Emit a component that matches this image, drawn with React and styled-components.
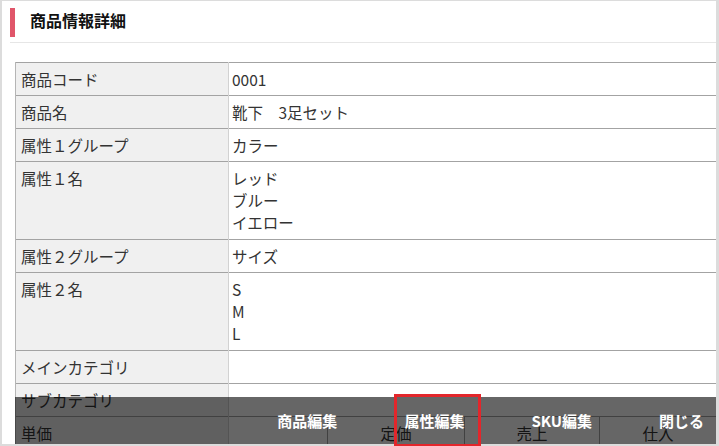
import React from "react";
import styled, { createGlobalStyle } from "styled-components";

const GlobalStyle = createGlobalStyle`
    html, body {
        margin: 0;
        overflow: hidden;
        background: #fff;
        font-family: "Noto Sans CJK JP", "Noto Sans", sans-serif;
        color: #333;
    }
`

const Frame = styled.div`
    position: relative;
    height: 446px;
    box-sizing: border-box;
    border-style: solid;
    border-color: #dcdcdc;
    border-width: 1px 3px 2px 2px;
    background: #fff;
`

const Content = styled.div`
    height: 100%;
    overflow: hidden;
`

const Header = styled.div`
    margin-left: 8px;
    padding: 7px 0 5px;
    border-bottom: 1px solid #e6e6e6;
`

const Title = styled.h1`
    margin: 0;
    height: 29px;
    border-left: 5px solid #e0566a;
    padding-left: 15px;
    font-size: 16px;
    font-weight: bold;
    line-height: 24px;
    color: #111;
`

const Table = styled.table`
    margin: 19px 0 0 13px;
    width: calc(100% - 13px);
    border-collapse: collapse;
    font-size: 15.5px;
`

const Row = styled.tr`
    border-top: 1px solid #a3a3a3;
    border-bottom: 1px solid #a3a3a3;
`

const Label = styled.th`
    width: 203px;
    height: 21px;
    padding: 6px 4px 5px 5px;
    background: #f0f0f0;
    border-left: 1px solid #b5b5b5;
    border-right: 1px solid #d2d2d2;
    text-align: left;
    vertical-align: top;
    font-weight: normal;
    line-height: 21px;
`

const Value = styled.td`
    padding: ${(p) => (p.$flush ? "0" : "6px 4px 5px 3px")};
    vertical-align: top;
    line-height: 21px;
`

const Line = styled.div`
    height: ${(p) => (p.$tall ? "22px" : "21px")};
`

const PriceGrid = styled.div`
    display: grid;
    grid-template-columns: 98px 137px 135px 1fr;
`

const PriceCell = styled.div`
    border-left: ${(p) => (p.$first ? "none" : "1px solid #a3a3a3")};
    padding: 6px 0 5px;
    text-align: center;
    line-height: 21px;
    height: 21px;
`

const Footer = styled.div`
    position: absolute;
    left: 13px;
    right: 0;
    bottom: 0;
    height: 47px;
    background: rgba(0, 0, 0, 0.6);
    display: flex;
    justify-content: flex-end;
    gap: 43px;
`

const Button = styled.button`
    position: relative;
    background: none;
    border: none;
    padding: 0 12px;
    color: #fff;
    font-family: inherit;
    font-size: 15px;
    font-weight: bold;
    cursor: pointer;

    &::after {
        content: "";
        display: ${(p) => (p.$active ? "block" : "none")};
        position: absolute;
        top: -3px;
        bottom: -3px;
        left: 2px;
        right: -5px;
        border: 3px solid #e3262b;
    }
`

const rows = [
    ["商品コード", ["0001"]],
    ["商品名", ["靴下　3足セット"]],
    ["属性１グループ", ["カラー"]],
    ["属性１名", ["レッド", "ブルー", "イエロー"]],
    ["属性２グループ", ["サイズ"]],
    ["属性２名", ["S", "M", "L"]],
    ["メインカテゴリ", [""]],
    ["サブカテゴリ", [""]],
];

const App = () => {
    return (
        <>
            <GlobalStyle />
            <Frame>
                <Content>
                    <Header>
                        <Title>商品情報詳細</Title>
                    </Header>
                    <Table>
                        <tbody>
                            {rows.map(([label, values]) => (
                                <Row key={label}>
                                    <Label>{label}</Label>
                                    <Value>
                                        {values.map((v, i) => (
                                            <Line key={i} $tall={values.length > 1}>
                                                {v || "\u00a0"}
                                            </Line>
                                        ))}
                                    </Value>
                                </Row>
                            ))}
                            <Row>
                                <Label>単価</Label>
                                <Value $flush>
                                    <PriceGrid>
                                        <PriceCell $first />
                                        <PriceCell>定価</PriceCell>
                                        <PriceCell>売上</PriceCell>
                                        <PriceCell>仕入</PriceCell>
                                    </PriceGrid>
                                </Value>
                            </Row>
                        </tbody>
                    </Table>
                </Content>
                <Footer>
                    <Button>商品編集</Button>
                    <Button $active>属性編集</Button>
                    <Button>SKU編集</Button>
                    <Button>閉じる</Button>
                </Footer>
            </Frame>
        </>
    );
}

export default App;
